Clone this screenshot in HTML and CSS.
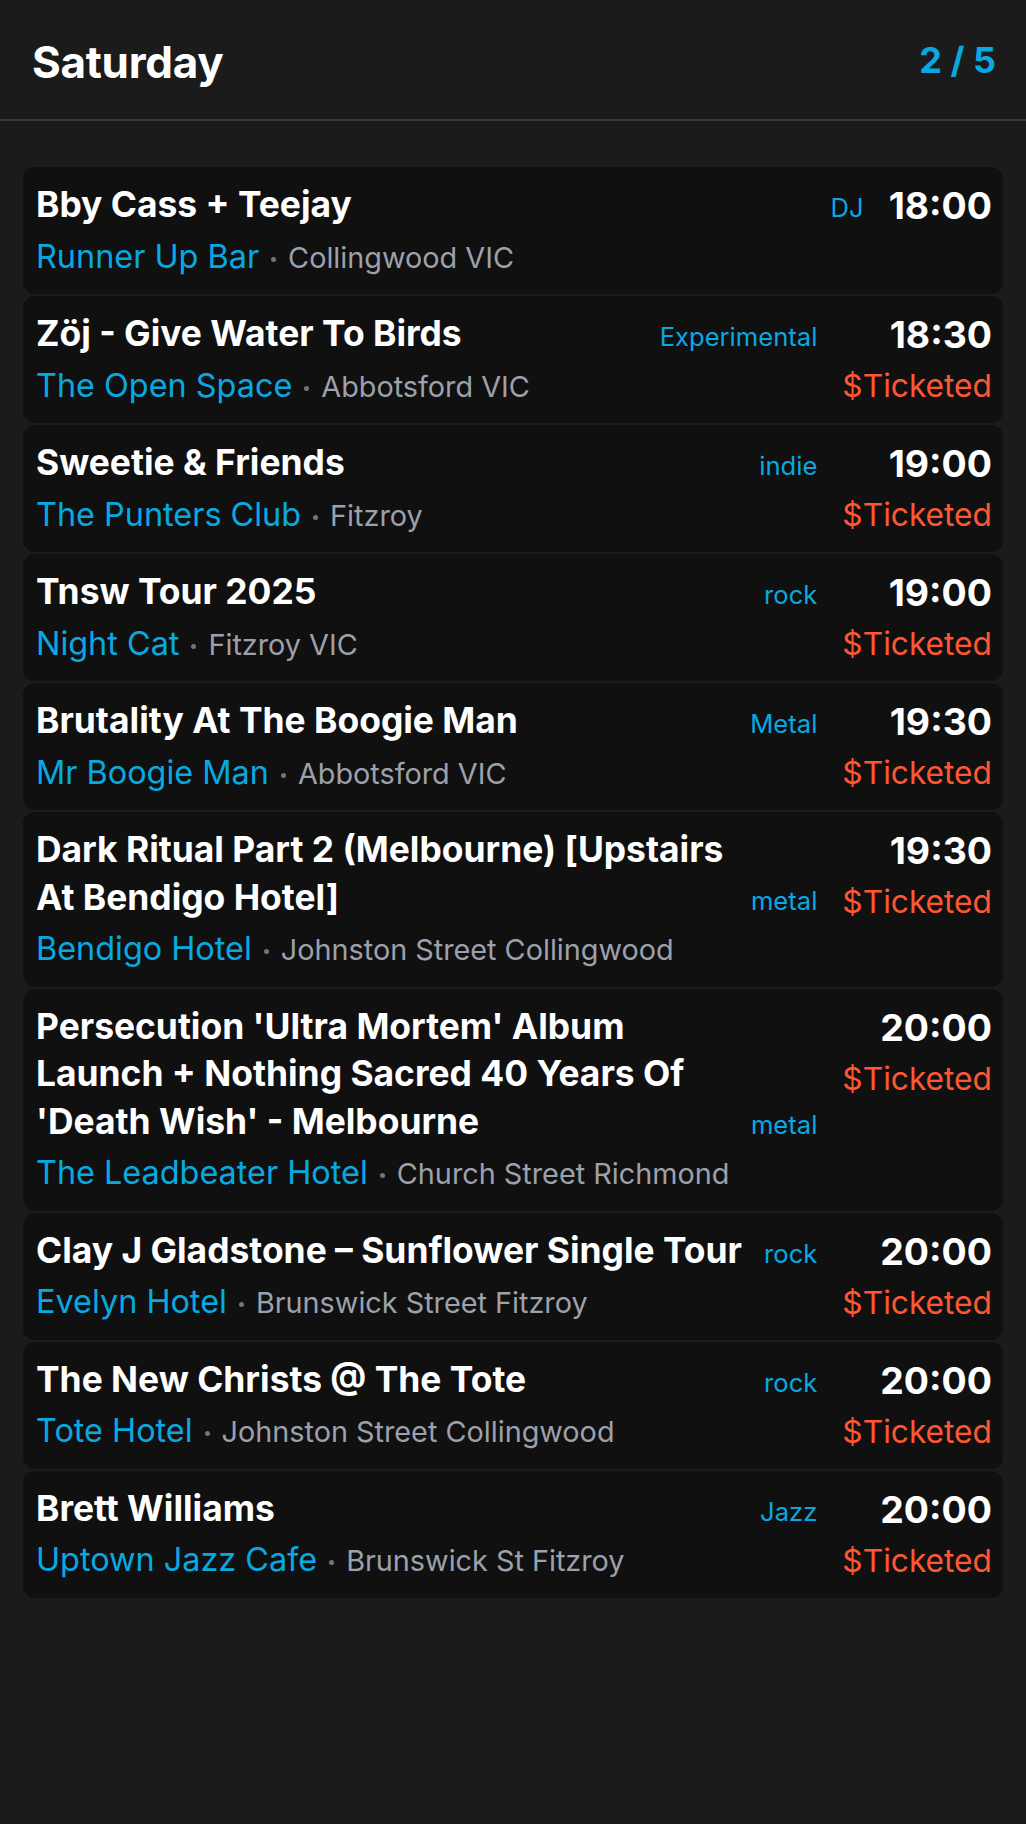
FILE: index.html
```html
<!DOCTYPE html>
<html lang="en">
<head>
<meta charset="utf-8">
<title>Saturday</title>
<link rel="stylesheet" href="styles.css">
</head>
<body>
<div class="app">
  <header class="topbar">
    <h1 class="day">Saturday</h1>
    <span class="pager">2 / 5</span>
  </header>
  <main class="list">
    <article class="card">
      <div class="main">
        <div class="head"><h2 class="title">Bby Cass + Teejay</h2><span class="genre">DJ</span></div>
        <div class="place"><span class="venue">Runner Up Bar</span><span class="dot"></span><span class="loc">Collingwood VIC</span></div>
      </div>
      <div class="side"><div class="time">18:00</div></div>
    </article>
    <article class="card">
      <div class="main">
        <div class="head"><h2 class="title">Zöj - Give Water To Birds</h2><span class="genre">Experimental</span></div>
        <div class="place"><span class="venue">The Open Space</span><span class="dot"></span><span class="loc">Abbotsford VIC</span></div>
      </div>
      <div class="side"><div class="time">18:30</div><div class="ticket">$Ticketed</div></div>
    </article>
    <article class="card">
      <div class="main">
        <div class="head"><h2 class="title">Sweetie &amp; Friends</h2><span class="genre">indie</span></div>
        <div class="place"><span class="venue">The Punters Club</span><span class="dot"></span><span class="loc">Fitzroy</span></div>
      </div>
      <div class="side"><div class="time">19:00</div><div class="ticket">$Ticketed</div></div>
    </article>
    <article class="card">
      <div class="main">
        <div class="head"><h2 class="title">Tnsw Tour 2025</h2><span class="genre">rock</span></div>
        <div class="place"><span class="venue">Night Cat</span><span class="dot"></span><span class="loc">Fitzroy VIC</span></div>
      </div>
      <div class="side"><div class="time">19:00</div><div class="ticket">$Ticketed</div></div>
    </article>
    <article class="card">
      <div class="main">
        <div class="head"><h2 class="title">Brutality At The Boogie Man</h2><span class="genre">Metal</span></div>
        <div class="place"><span class="venue">Mr Boogie Man</span><span class="dot"></span><span class="loc">Abbotsford VIC</span></div>
      </div>
      <div class="side"><div class="time">19:30</div><div class="ticket">$Ticketed</div></div>
    </article>
    <article class="card">
      <div class="main">
        <div class="head"><h2 class="title">Dark Ritual Part 2 (Melbourne) [Upstairs At Bendigo Hotel]</h2><span class="genre">metal</span></div>
        <div class="place"><span class="venue">Bendigo Hotel</span><span class="dot"></span><span class="loc">Johnston Street Collingwood</span></div>
      </div>
      <div class="side"><div class="time">19:30</div><div class="ticket">$Ticketed</div></div>
    </article>
    <article class="card">
      <div class="main">
        <div class="head"><h2 class="title">Persecution 'Ultra Mortem' Album Launch + Nothing Sacred 40 Years Of 'Death Wish' - Melbourne</h2><span class="genre">metal</span></div>
        <div class="place"><span class="venue">The Leadbeater Hotel</span><span class="dot"></span><span class="loc">Church Street Richmond</span></div>
      </div>
      <div class="side"><div class="time">20:00</div><div class="ticket">$Ticketed</div></div>
    </article>
    <article class="card">
      <div class="main">
        <div class="head"><h2 class="title">Clay J Gladstone – Sunflower Single Tour</h2><span class="genre">rock</span></div>
        <div class="place"><span class="venue">Evelyn Hotel</span><span class="dot"></span><span class="loc">Brunswick Street Fitzroy</span></div>
      </div>
      <div class="side"><div class="time">20:00</div><div class="ticket">$Ticketed</div></div>
    </article>
    <article class="card">
      <div class="main">
        <div class="head"><h2 class="title">The New Christs @ The Tote</h2><span class="genre">rock</span></div>
        <div class="place"><span class="venue">Tote Hotel</span><span class="dot"></span><span class="loc">Johnston Street Collingwood</span></div>
      </div>
      <div class="side"><div class="time">20:00</div><div class="ticket">$Ticketed</div></div>
    </article>
    <article class="card">
      <div class="main">
        <div class="head"><h2 class="title">Brett Williams</h2><span class="genre">Jazz</span></div>
        <div class="place"><span class="venue">Uptown Jazz Cafe</span><span class="dot"></span><span class="loc">Brunswick St Fitzroy</span></div>
      </div>
      <div class="side"><div class="time">20:00</div><div class="ticket">$Ticketed</div></div>
    </article>
  </main>
</div>
</body>
</html>
```

FILE: styles.css
```css
html, body {
  margin: 0;
  padding: 0;
  background: #1b1b1b;
}

body {
  font-family: Inter, "Noto Sans", "Liberation Sans", sans-serif;
  color: #ffffff;
  min-height: 1824px;
}

.topbar {
  display: flex;
  justify-content: space-between;
  align-items: center;
  box-sizing: border-box;
  height: 121px;
  padding: 6px 30px 0 32px;
  border-bottom: 2px solid #323a48;
}

.day {
  margin: 0;
  font-size: 44px;
  font-weight: 700;
  line-height: 1.2;
  letter-spacing: -0.3px;
}

.pager {
  margin-bottom: 4px;
  color: #08a9e1;
  font-size: 36px;
  font-weight: 700;
  line-height: 1.2;
}

.list {
  display: flex;
  flex-direction: column;
  gap: 2px;
  padding: 46px 23px;
}

.card {
  display: flex;
  gap: 25px;
  background: #101010;
  border-radius: 12px;
  padding: 14px 11px 14px 13px;
}

.main {
  flex: 1;
  min-width: 0;
}

.head {
  display: flex;
  align-items: last baseline;
  gap: 14px;
}

.title {
  flex: 1;
  min-width: 0;
  margin: 0;
  font-size: 35.4px;
  font-weight: 700;
  line-height: 47.5px;
}

.genre {
  color: #08a9e1;
  font-size: 25.6px;
  line-height: 1;
  white-space: nowrap;
}

.place {
  margin-top: 4px;
  font-size: 32.4px;
  line-height: 47.5px;
  white-space: nowrap;
}

.venue {
  color: #08a9e1;
}

.dot {
  display: inline-block;
  width: 5px;
  height: 5px;
  margin: 0 12px;
  border-radius: 50%;
  background: #6f7582;
  vertical-align: 6px;
}

.loc {
  color: #9ca1ab;
  font-size: 28.8px;
  line-height: 1;
}

.side {
  text-align: right;
  white-space: nowrap;
}

.time {
  font-size: 37.4px;
  font-weight: 700;
  line-height: 50px;
}

.ticket {
  margin-top: 2px;
  color: #ff5733;
  font-size: 31.7px;
  line-height: 47px;
}
```
